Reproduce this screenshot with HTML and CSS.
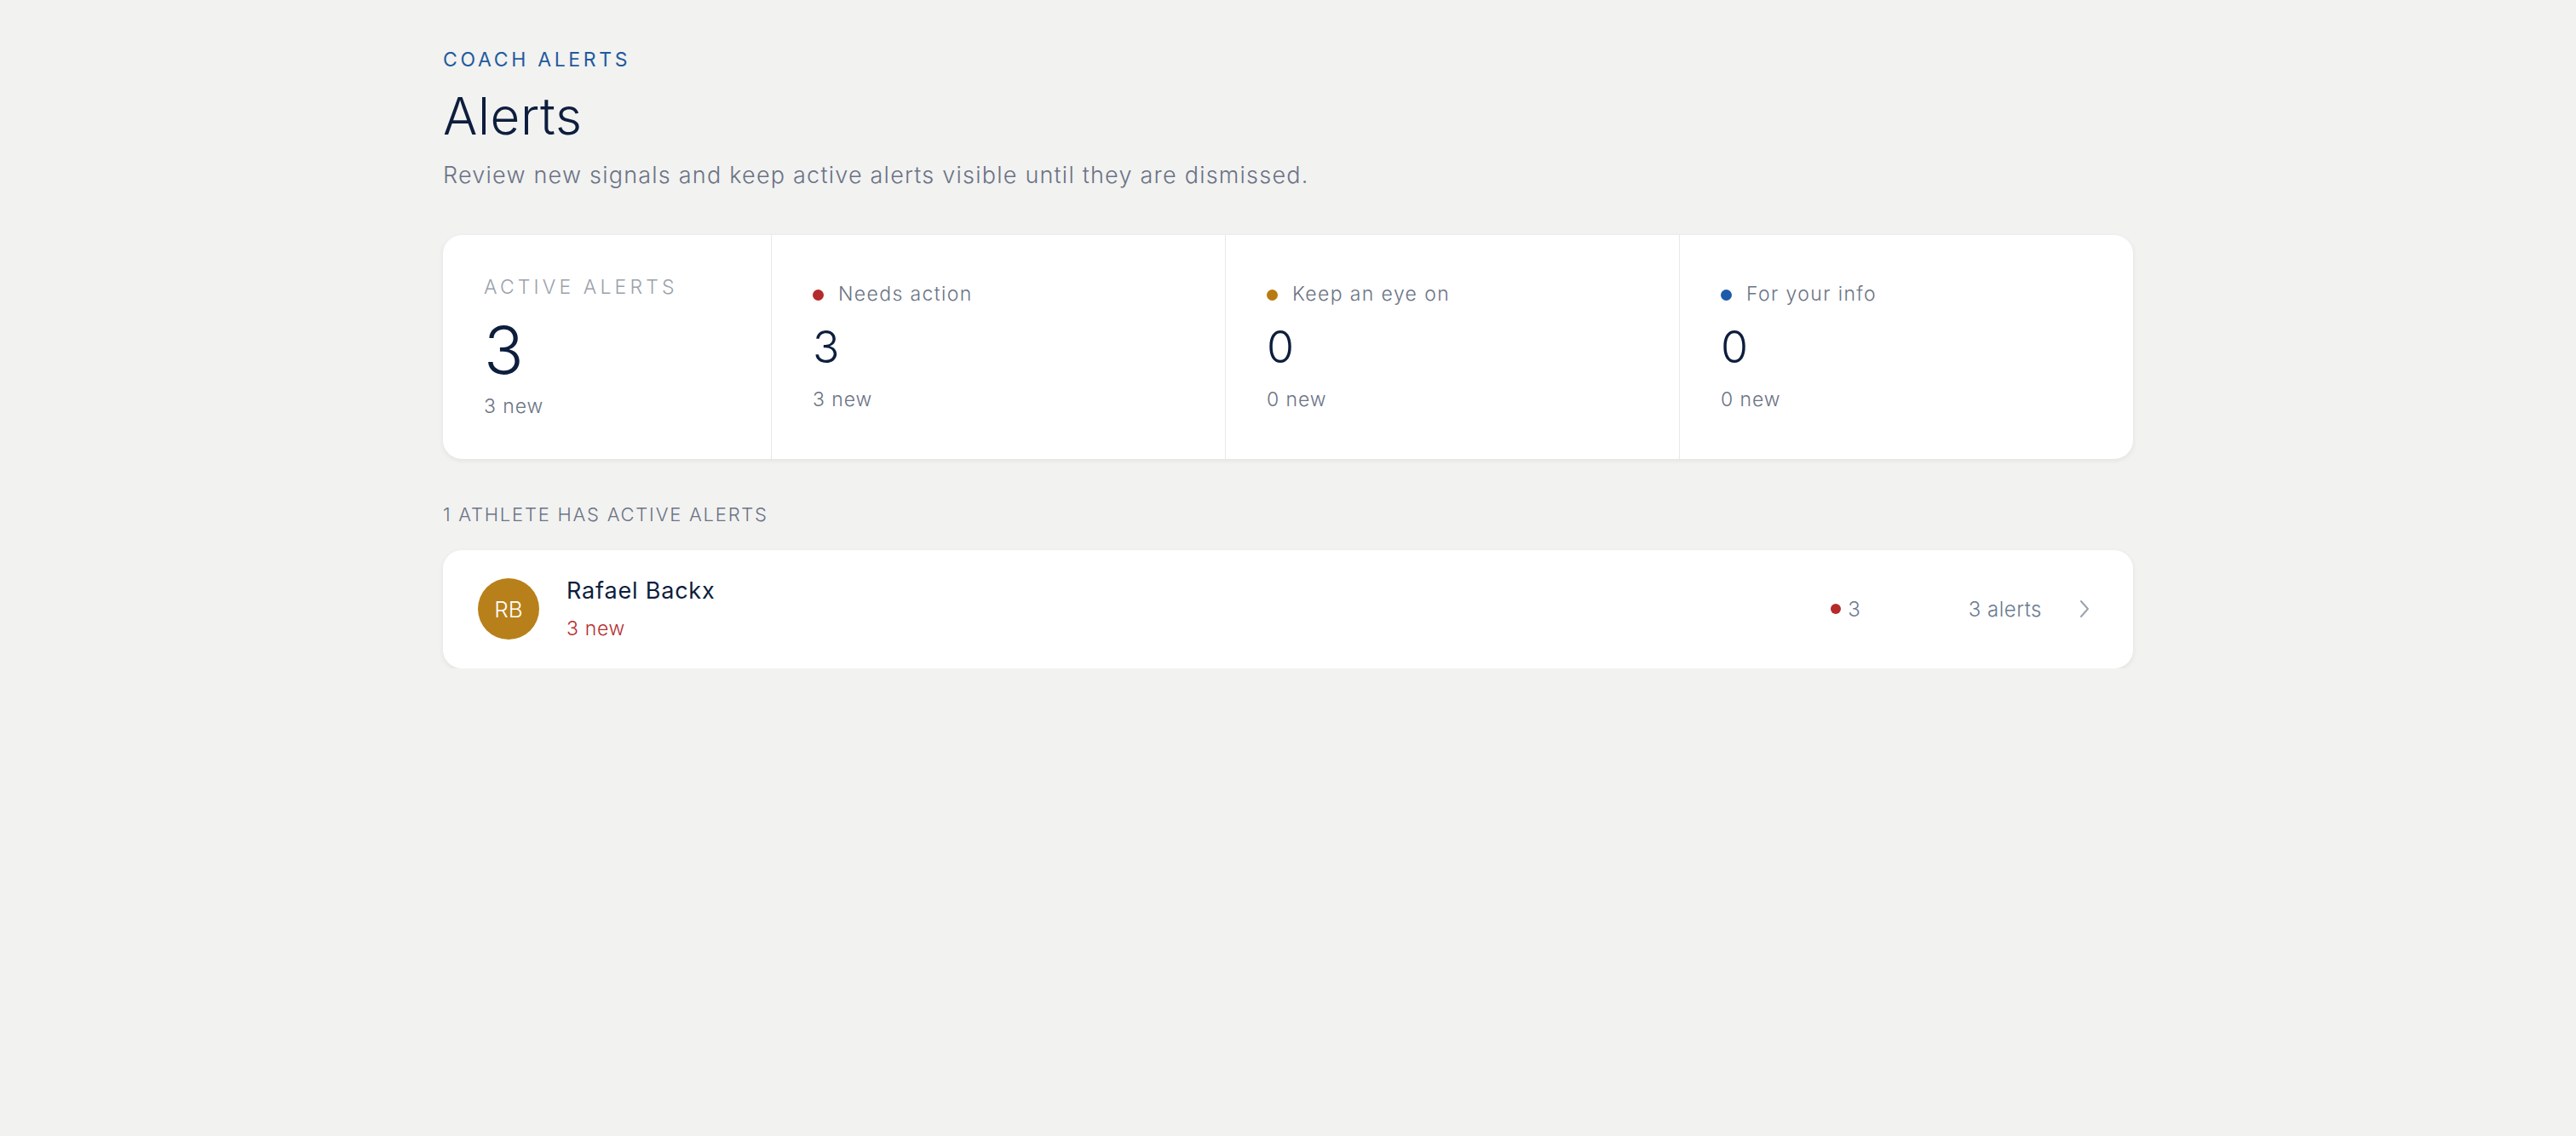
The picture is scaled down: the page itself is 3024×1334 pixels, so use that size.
FILE: index.html
```html
<!DOCTYPE html>
<html lang="en">
<head>
    <meta charset="UTF-8">
    <meta name="viewport" content="width=device-width, initial-scale=1.0">
    <title>Alerts</title>
    <link rel="stylesheet" href="styles.css">
</head>
<body>
    <main class="page">
        <header class="page-head">
            <p class="eyebrow">Coach alerts</p>
            <h1 class="title">Alerts</h1>
            <p class="lead">Review new signals and keep active alerts visible until they are dismissed.</p>
        </header>

        <section class="summary">
            <div class="summary-cell summary-total">
                <div class="total-label">Active alerts</div>
                <div class="total-count">3</div>
                <div class="total-new">3 new</div>
            </div>
            <div class="summary-cell">
                <div class="cell-label"><span class="dot dot-red"></span>Needs action</div>
                <div class="cell-count">3</div>
                <div class="cell-new">3 new</div>
            </div>
            <div class="summary-cell">
                <div class="cell-label"><span class="dot dot-amber"></span>Keep an eye on</div>
                <div class="cell-count">0</div>
                <div class="cell-new">0 new</div>
            </div>
            <div class="summary-cell">
                <div class="cell-label"><span class="dot dot-blue"></span>For your info</div>
                <div class="cell-count">0</div>
                <div class="cell-new">0 new</div>
            </div>
        </section>

        <h2 class="section-label">1 athlete has active alerts</h2>

        <ul class="athlete-list">
            <li class="athlete-row">
                <div class="avatar">RB</div>
                <div class="athlete-info">
                    <div class="athlete-name">Rafael Backx</div>
                    <div class="athlete-new">3 new</div>
                </div>
                <div class="athlete-counts">
                    <span class="dot dot-small dot-red"></span>3
                </div>
                <div class="athlete-total">3 alerts</div>
                <svg class="chevron" width="12" height="22" viewBox="0 0 12 22" aria-hidden="true">
                    <path d="M2 2 L10 11 L2 20" fill="none" stroke="#9aa2ae" stroke-width="2" stroke-linecap="round" stroke-linejoin="round"/>
                </svg>
            </li>
        </ul>
    </main>
</body>
</html>
```

FILE: styles.css
```css
body {
    margin: 0;
    padding: 0;
    background-color: #f2f2f1;
    font-family: Inter, "Open Sans", sans-serif;
    color: #0d1e3d;
}

.page {
    max-width: 1984px;
    margin: 0 auto;
    padding-top: 57px;
}

.page-head p,
.page-head h1 {
    margin: 0;
}

.eyebrow {
    font-size: 23px;
    line-height: 1.2;
    font-weight: 400;
    letter-spacing: 0.16em;
    text-transform: uppercase;
    color: #1f5a9e;
}

.title {
    margin-top: 18px !important;
    font-size: 60px;
    line-height: 1.1;
    font-weight: 300;
    color: #0d1e3d;
    letter-spacing: 0.01em;
}

.lead {
    margin-top: 18px !important;
    font-size: 27px;
    line-height: 1.4;
    font-weight: 300;
    letter-spacing: 0.045em;
    color: #6b7385;
}

.summary {
    display: grid;
    grid-template-columns: 385px 1fr 1fr 1fr;
    height: 263px;
    margin-top: 52px;
    background-color: #fff;
    border-radius: 22px;
    box-shadow: 0 2px 6px rgba(0, 0, 0, 0.07);
    overflow: hidden;
}

.summary-cell {
    display: flex;
    flex-direction: column;
    justify-content: center;
    padding: 0 48px;
    border-left: 1px solid #e8e8e8;
}

.summary-total {
    border-left: none;
}

.total-label {
    font-size: 23px;
    line-height: 1.2;
    letter-spacing: 0.18em;
    text-transform: uppercase;
    font-weight: 300;
    color: #9ba1ab;
}

.total-count {
    margin-top: 21px;
    font-size: 77px;
    line-height: 1;
    font-weight: 300;
    color: #0d1e3d;
}

.total-new {
    margin-top: 14px;
    font-size: 23px;
    line-height: 1.2;
    font-weight: 300;
    letter-spacing: 0.04em;
    color: #6b7385;
}

.cell-label {
    display: flex;
    align-items: center;
    font-size: 23px;
    line-height: 1.2;
    font-weight: 300;
    letter-spacing: 0.06em;
    color: #6b7385;
}

.dot {
    display: inline-block;
    width: 13px;
    height: 13px;
    border-radius: 50%;
    margin-right: 17px;
}

.dot-small {
    width: 12px;
    height: 12px;
    margin-right: 8px;
}

.dot-red {
    background-color: #b52a2a;
}

.dot-amber {
    background-color: #b87a12;
}

.dot-blue {
    background-color: #1d5ba8;
}

.cell-count {
    margin-top: 22px;
    font-size: 52px;
    line-height: 1;
    font-weight: 300;
    color: #0d1e3d;
}

.cell-new {
    margin-top: 22px;
    font-size: 23px;
    line-height: 1.2;
    font-weight: 300;
    letter-spacing: 0.04em;
    color: #6b7385;
}

.section-label {
    margin: 52px 0 0;
    font-size: 22px;
    line-height: 1.2;
    font-weight: 300;
    letter-spacing: 0.08em;
    text-transform: uppercase;
    color: #6b7385;
}

.athlete-list {
    list-style: none;
    margin: 28px 0 0;
    padding: 0;
}

.athlete-row {
    display: flex;
    align-items: center;
    height: 139px;
    padding: 0 51px 0 41px;
    background-color: #fff;
    border-radius: 22px;
    box-shadow: 0 2px 6px rgba(0, 0, 0, 0.07);
}

.avatar {
    display: flex;
    align-items: center;
    justify-content: center;
    width: 72px;
    height: 72px;
    border-radius: 50%;
    background-color: #b8801a;
    color: #fff;
    font-size: 26px;
    font-weight: 300;
}

.athlete-info {
    flex: 1;
    margin-left: 32px;
}

.athlete-name {
    font-size: 27px;
    line-height: 1.2;
    font-weight: 400;
    letter-spacing: 0.03em;
    color: #0d1e3d;
}

.athlete-new {
    margin-top: 15px;
    font-size: 23px;
    line-height: 1.2;
    font-weight: 300;
    letter-spacing: 0.03em;
    color: #b53030;
}

.athlete-counts {
    display: flex;
    align-items: center;
    font-size: 24px;
    font-weight: 300;
    color: #6b7b90;
}

.athlete-total {
    margin-left: 127px;
    font-size: 24px;
    font-weight: 300;
    letter-spacing: 0.02em;
    color: #6b7b90;
}

.chevron {
    margin-left: 44px;
}
```
